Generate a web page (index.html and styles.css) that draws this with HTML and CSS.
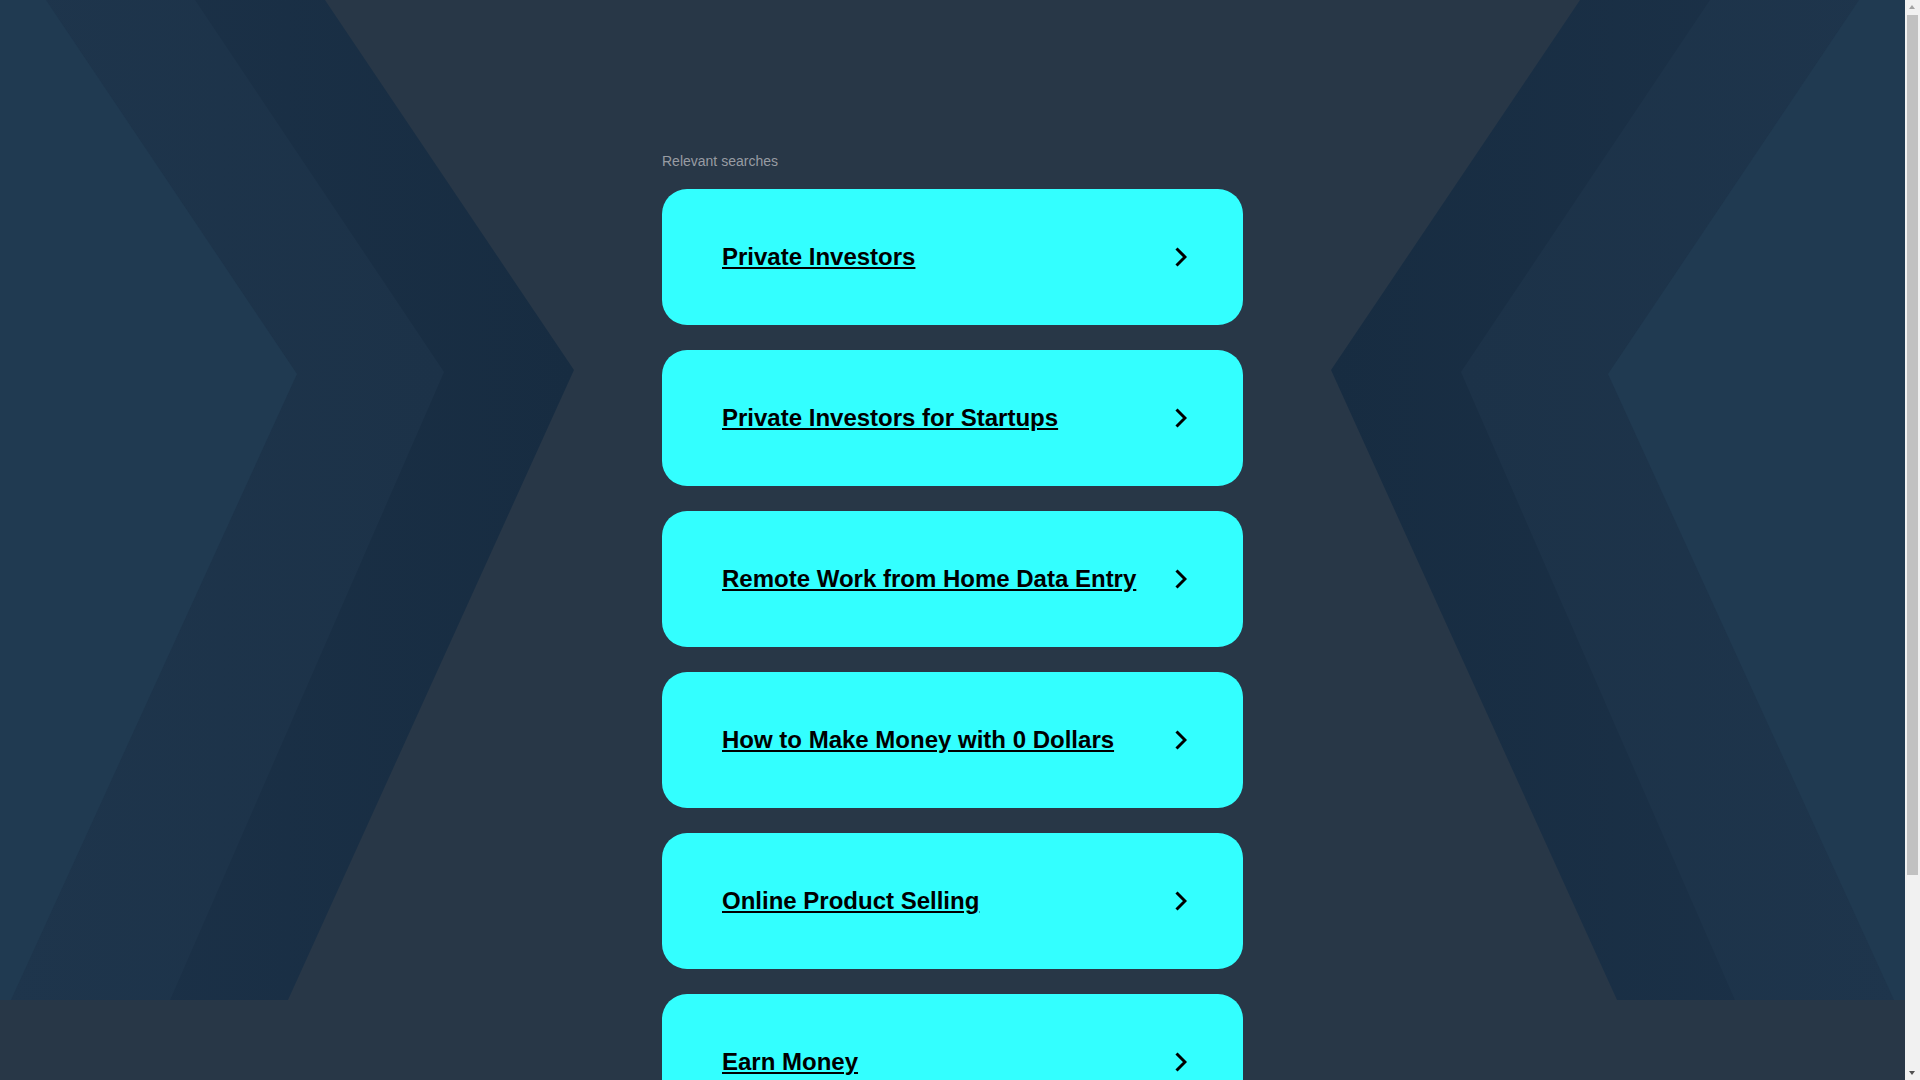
FILE: index.html
```html
<!DOCTYPE html>
<html lang="en">
<head>
<meta charset="utf-8">
<title>Relevant searches</title>
<link rel="stylesheet" href="styles.css">
</head>
<body>
<div class="page">
  <div class="backdrop">
    <svg class="shape shape-left" width="600" height="1000" viewBox="0 0 600 1000" aria-hidden="true">
      <defs>
        <linearGradient id="gOuter" x1="0" y1="0" x2="1" y2="0">
          <stop offset="0" stop-color="#1c3249"/>
          <stop offset="1" stop-color="#172c41"/>
        </linearGradient>
        <linearGradient id="gMid" x1="0" y1="0" x2="1" y2="0">
          <stop offset="0" stop-color="#1e354c"/>
          <stop offset="1" stop-color="#1c3248"/>
        </linearGradient>
      </defs>
      <polygon points="0,0 325,0 574,370 288,1000 0,1000" fill="url(#gOuter)"/>
      <polygon points="0,0 195,0 444,372 170,1000 0,1000" fill="url(#gMid)"/>
      <polygon points="0,0 46,0 297,374 11,1000 0,1000" fill="#203a51"/>
    </svg>
    <svg class="shape shape-right" width="600" height="1000" viewBox="0 0 600 1000" aria-hidden="true">
      <polygon points="0,0 325,0 574,370 288,1000 0,1000" fill="url(#gOuter)"/>
      <polygon points="0,0 195,0 444,372 170,1000 0,1000" fill="url(#gMid)"/>
      <polygon points="0,0 46,0 297,374 11,1000 0,1000" fill="#203a51"/>
    </svg>
  </div>

  <main class="content">
    <div class="title">Relevant searches</div>
    <ul class="list">
      <li class="card"><a class="link" href="#">Private Investors</a><svg class="chev" width="12" height="20" viewBox="0 0 12 20"><polyline points="1.5,1.5 10,10 1.5,18.5"/></svg></li>
      <li class="card"><a class="link" href="#">Private Investors for Startups</a><svg class="chev" width="12" height="20" viewBox="0 0 12 20"><polyline points="1.5,1.5 10,10 1.5,18.5"/></svg></li>
      <li class="card"><a class="link" href="#">Remote Work from Home Data Entry</a><svg class="chev" width="12" height="20" viewBox="0 0 12 20"><polyline points="1.5,1.5 10,10 1.5,18.5"/></svg></li>
      <li class="card"><a class="link" href="#">How to Make Money with 0 Dollars</a><svg class="chev" width="12" height="20" viewBox="0 0 12 20"><polyline points="1.5,1.5 10,10 1.5,18.5"/></svg></li>
      <li class="card"><a class="link" href="#">Online Product Selling</a><svg class="chev" width="12" height="20" viewBox="0 0 12 20"><polyline points="1.5,1.5 10,10 1.5,18.5"/></svg></li>
      <li class="card"><a class="link" href="#">Earn Money</a><svg class="chev" width="12" height="20" viewBox="0 0 12 20"><polyline points="1.5,1.5 10,10 1.5,18.5"/></svg></li>
    </ul>
  </main>
</div>

<div class="scrollbar" aria-hidden="true">
  <div class="sb-arrow sb-up"></div>
  <div class="sb-track"><div class="sb-thumb"></div></div>
  <div class="sb-arrow sb-down"></div>
</div>
</body>
</html>
```

FILE: styles.css
```css
html, body {
  margin: 0;
  padding: 0;
}

body {
  background: #283747;
  font-family: "Liberation Sans", Arial, sans-serif;
}

.page {
  position: relative;
  width: calc(100% - 15px);
  min-height: 100vh;
}

.backdrop {
  position: absolute;
  top: 0;
  left: 0;
  right: 0;
  height: 1000px;
  overflow: hidden;
  display: flex;
  justify-content: space-between;
  z-index: 0;
}

.shape {
  display: block;
  flex: none;
}

.shape-right {
  transform: scaleX(-1);
}

.content {
  position: relative;
  z-index: 1;
  width: 581px;
  margin: 0 auto;
  padding-top: 153px;
  padding-bottom: 60px;
}

.title {
  font-size: 14px;
  line-height: 16px;
  color: #989ca3;
  margin-bottom: 20px;
}

.list {
  list-style: none;
  margin: 0;
  padding: 0;
  display: flex;
  flex-direction: column;
  gap: 25px;
}

.card {
  height: 136px;
  box-sizing: border-box;
  background: #33ffff;
  border-radius: 25px;
  display: flex;
  align-items: center;
  justify-content: space-between;
  padding: 0 56px 0 60px;
}

.link {
  font-size: 24px;
  font-weight: bold;
  color: #000;
  text-decoration: underline;
}

.chev {
  display: block;
  flex: none;
}

.chev polyline {
  fill: none;
  stroke: #000;
  stroke-width: 3;
  stroke-linecap: butt;
  stroke-linejoin: miter;
}

/* emulated classic browser scrollbar */
.scrollbar {
  position: fixed;
  top: 0;
  right: 0;
  width: 15px;
  height: 100vh;
  background: #f1f1f1;
  display: flex;
  flex-direction: column;
  z-index: 5;
}

.sb-arrow {
  height: 15px;
  flex: none;
  position: relative;
}

.sb-arrow::after {
  content: "";
  position: absolute;
  left: 4px;
  border-left: 3.5px solid transparent;
  border-right: 3.5px solid transparent;
}

.sb-up::after {
  top: 5px;
  border-bottom: 4px solid #a3a3a3;
}

.sb-down::after {
  top: 6px;
  border-top: 4px solid #505050;
}

.sb-track {
  flex: 1;
  padding: 0 2px;
}

.sb-thumb {
  height: 860px;
  background: #c1c1c1;
  border-radius: 0;
}
```
